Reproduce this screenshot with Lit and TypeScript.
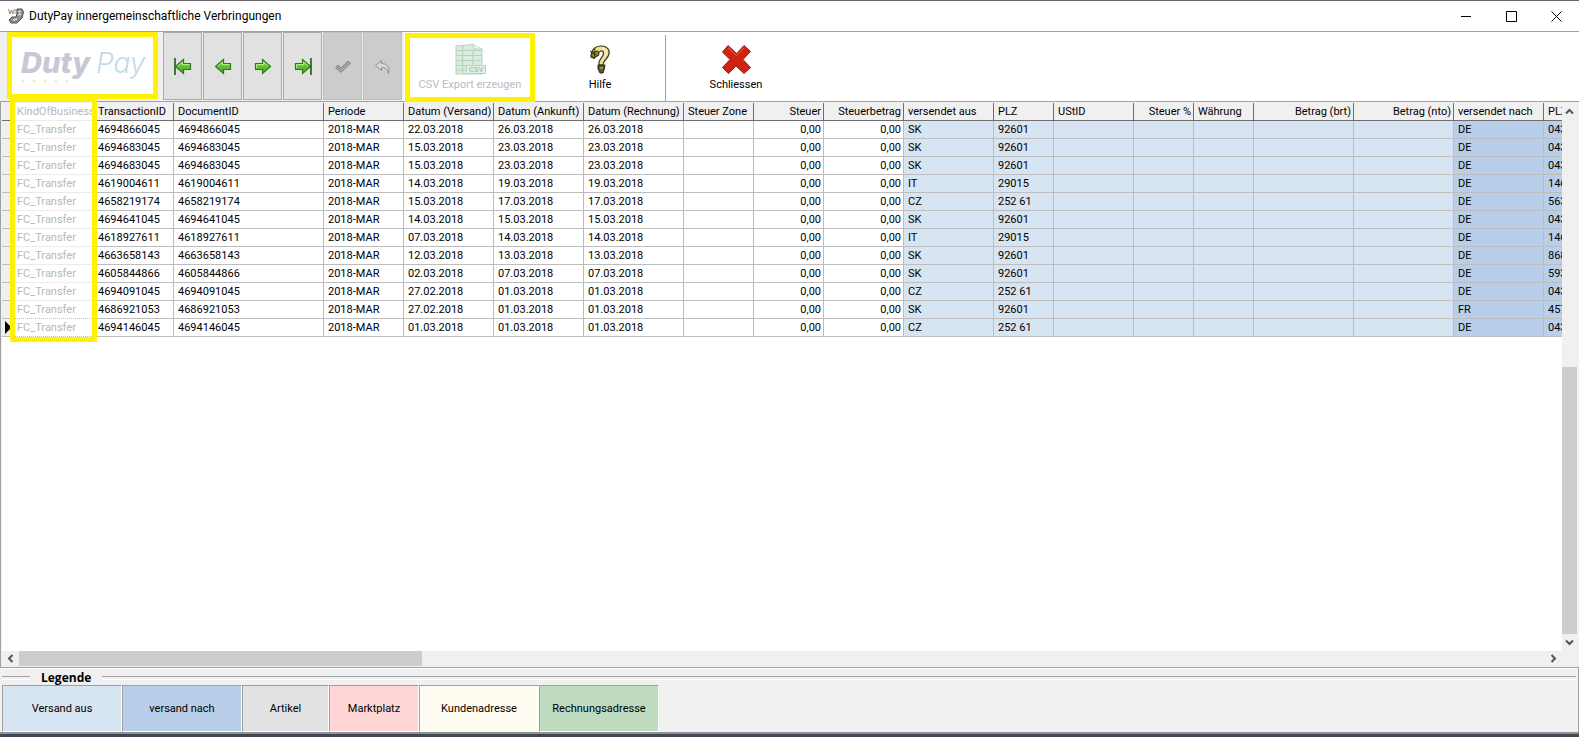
import { LitElement, html, css, svg, nothing } from "lit";
import { customElement } from "lit/decorators.js";
import { classMap } from "lit/directives/class-map.js";

interface Column {
  title: string;
  width: number;
  right?: boolean;
  tone?: "from" | "to" | "marked";
}

const COLUMNS: Column[] = [
  { title: "KindOfBusiness", width: 80, tone: "marked" },
  { title: "TransactionID", width: 80 },
  { title: "DocumentID", width: 150 },
  { title: "Periode", width: 80 },
  { title: "Datum (Versand)", width: 90 },
  { title: "Datum (Ankunft)", width: 90 },
  { title: "Datum (Rechnung)", width: 100 },
  { title: "Steuer Zone", width: 70 },
  { title: "Steuer", width: 70, right: true },
  { title: "Steuerbetrag", width: 80, right: true },
  { title: "versendet aus", width: 90, tone: "from" },
  { title: "PLZ", width: 60, tone: "from" },
  { title: "UStID", width: 80, tone: "from" },
  { title: "Steuer %", width: 60, right: true, tone: "from" },
  { title: "Währung", width: 60, tone: "from" },
  { title: "Betrag (brt)", width: 100, right: true, tone: "from" },
  { title: "Betrag (nto)", width: 100, right: true, tone: "from" },
  { title: "versendet nach", width: 90, tone: "to" },
  { title: "PLZ", width: 60, tone: "to" },
];

// id, shipped, arrived, origin country, origin zip, target country, target zip
const TRANSFERS: string[][] = [
  ["4694866045", "22.03.2018", "26.03.2018", "SK", "92601", "DE", "04347"],
  ["4694683045", "15.03.2018", "23.03.2018", "SK", "92601", "DE", "04347"],
  ["4694683045", "15.03.2018", "23.03.2018", "SK", "92601", "DE", "04347"],
  ["4619004611", "14.03.2018", "19.03.2018", "IT", "29015", "DE", "14656"],
  ["4658219174", "15.03.2018", "17.03.2018", "CZ", "252 61", "DE", "56330"],
  ["4694641045", "14.03.2018", "15.03.2018", "SK", "92601", "DE", "04347"],
  ["4618927611", "07.03.2018", "14.03.2018", "IT", "29015", "DE", "14656"],
  ["4663658143", "12.03.2018", "13.03.2018", "SK", "92601", "DE", "86836"],
  ["4605844866", "02.03.2018", "07.03.2018", "SK", "92601", "DE", "59368"],
  ["4694091045", "27.02.2018", "01.03.2018", "CZ", "252 61", "DE", "04347"],
  ["4686921053", "27.02.2018", "01.03.2018", "SK", "92601", "FR", "45770"],
  ["4694146045", "01.03.2018", "01.03.2018", "CZ", "252 61", "DE", "04347"],
];

const toRow = ([id, sent, arrived, from, fromZip, to, toZip]: string[]) => [
  "FC_Transfer", id, id, "2018-MAR", sent, arrived, arrived, "", "0,00", "0,00",
  from, fromZip, "", "", "", "", "", to, toZip,
];

const LEGEND = [
  { text: "Versand aus", cls: "l-from" },
  { text: "versand nach", cls: "l-to" },
  { text: "Artikel", cls: "l-item" },
  { text: "Marktplatz", cls: "l-market" },
  { text: "Kundenadresse", cls: "l-customer" },
  { text: "Rechnungsadresse", cls: "l-invoice" },
];

const arrowLeft = svg`<path d="M1.5 8.5 9.5 1.5V5.5H16.5V11.5H9.5V15.5Z" fill="url(#g)" stroke="#2c7a14" stroke-width="1.2"/><path d="M3.5 8.5 8.5 4V6.6H15.4" fill="none" stroke="#b6ee8c"/>`;
const arrowRight = svg`<path d="M16.5 8.5 8.5 1.5V5.5H1.5V11.5H8.5V15.5Z" fill="url(#g)" stroke="#2c7a14" stroke-width="1.2"/><path d="M2.6 10V6.6H9.6V4L14 7.8" fill="none" stroke="#b6ee8c"/>`;
const bar = (x: number) => svg`<path d="M${x} 0V17" stroke="#1d5c12" stroke-width="1.6"/>`;

const NAV = [
  { label: "Erster Datensatz", off: false, icon: svg`${bar(1)}${arrowLeft}` },
  { label: "Vorheriger Datensatz", off: false, icon: arrowLeft },
  { label: "Nächster Datensatz", off: false, icon: arrowRight },
  { label: "Letzter Datensatz", off: false, icon: svg`${arrowRight}${bar(17)}` },
  {
    label: "Übernehmen", off: true,
    icon: svg`<path d="M1.5 9.5 4 7 7 10 14 3 16.5 5 7 14.5Z" fill="#a2a2a2" stroke="#858585"/>`,
  },
  {
    label: "Verwerfen", off: true,
    icon: svg`<path d="M1.5 7.5 7.5 2.5V5.5C13 5.5 16 9 14.5 15.5C13.5 11 11.5 9.5 7.5 9.5V12.5Z" fill="#d9d9d9" stroke="#909090"/>`,
  },
];

const chevron = (d: string) => html`<svg width="9" height="9" viewBox="0 0 9 9" aria-hidden="true"><path d=${d} fill="none" stroke="#555" stroke-width="2"/></svg>`;

@customElement("app-root")
export class AppRoot extends LitElement {
  static styles = css`
    :host {
      display: flex;
      flex-direction: column;
      height: 100vh;
      box-sizing: border-box;
      border-top: 1px solid #69666b;
      background: #f0f0f0;
      color: #000;
      font: 11px/16px Roboto, "Liberation Sans", sans-serif;
      overflow: hidden;
    }
    * { box-sizing: border-box; }
    button { margin: 0; padding: 0; border: 0; background: none; font: inherit; color: inherit; }
    svg { display: block; flex: none; }

    .titlebar { display: flex; align-items: center; height: 30px; flex: none; background: #fff; padding-left: 8px; }
    .titlebar h1 { flex: 1; margin: 0 0 0 5px; font: 12px/16px Roboto, "Open Sans", sans-serif; }
    .win { width: 45px; height: 30px; display: grid; place-items: center; }

    .toolbar { display: flex; height: 71px; flex: none; border-top: 1px solid #a2a2a2; border-bottom: 1px solid #a2a2a2; background: #fff; }
    .nav { display: flex; background: #f0f0f0; padding: 0 1px 1px 7px; }
    .logo { width: 151px; height: 67px; border: 5px solid #fff200; background: #fff; margin-right: 5px; display: grid; place-items: center; }
    .step { width: 39px; height: 68px; margin-right: 1px; border: 1px solid #ababab; background: #e1e1e1; display: grid; place-items: center; }
    .step:disabled { background: #ccc; border-color: #bfbfbf; }
    .tool { width: 130px; display: flex; flex-direction: column; align-items: center; gap: 2px; padding-top: 12px; }
    .tool.marked { border: 5px solid #fff200; padding-top: 6px; margin: 1px 0 0 1px; height: 69px; color: #bcbcbc; }
    .divider { width: 1px; background: #a0a0a0; margin: 3px 5px 0 0; }

    .grid { flex: 1; min-height: 0; display: grid; grid-template-columns: minmax(0, 1fr) 15px; grid-template-rows: minmax(0, 1fr) 15px; border-left: 1px solid #a0a0a0; padding: 1px 2px 1px 1px; position: relative; }
    .pane { overflow: hidden; background: #fff; }
    table { table-layout: fixed; border-spacing: 0; width: 0; }
    th, td { height: 18px; padding: 1px 2px 0 4px; border: 0 solid #bdbdbd; border-width: 0 1px 1px 0; text-align: left; font-weight: normal; line-height: 16px; white-space: nowrap; overflow: hidden; }
    th { background: #f0f0f0; border-color: #6e6e6e; }
    .right { text-align: right; }
    td.from { background: #d7e4f1; }
    td.to { background: #b9cfe9; }
    .marked-cell { background: #fff; color: #b8b8b8; border-color: #ececec; padding: 1px 0 0 3px; }
    tr:nth-last-child(-n + 2) td.marked-cell { border-bottom: 1px dotted #f3a9b4; }
    .row-head { background: #f0f0f0; padding: 0 0 0 3px; }
    .column-mark { position: absolute; left: 9px; top: -5px; width: 87px; height: 245px; border: 5px solid #fff200; pointer-events: none; }

    .vbar { display: flex; flex-direction: column; background: #f0f0f0; }
    .hbar { display: flex; background: #f0f0f0; }
    .scroll-btn { width: 17px; height: 17px; flex: none; display: grid; place-items: center; }
    .vbar .scroll-btn { width: 15px; }
    .hbar .scroll-btn { height: 15px; }
    .track { flex: 1; display: flex; }
    .vbar .track { flex-direction: column; justify-content: flex-end; }
    .thumb { background: #cdcdcd; }
    .vbar .thumb { height: 52%; }
    .hbar .thumb { width: 26.4%; }

    .legend { flex: none; border-top: 1px solid #a2a2a2; border-right: 1px solid #a2a2a2; padding: 2px 2px 0 2px; box-shadow: inset 0 1px #fff; }
    .caption { display: flex; align-items: center; margin: 0; height: 15px; font: bold 12px/15px "Open Sans", "Noto Sans", sans-serif; gap: 11px; }
    .caption::before, .caption::after { content: ""; height: 2px; border-top: 1px solid #a0a0a0; border-bottom: 1px solid #fff; width: 28px; }
    .caption::after { flex: 1; }
    .swatches { display: flex; list-style: none; margin: 0; padding: 0; }
    .swatch { width: 120px; height: 47px; display: grid; place-items: center; border: 1px solid #a0a0a0; border-right-color: #fff; border-bottom-color: #fff; }
    .l-from { background: #d7e4f1; }
    .l-to { background: #b9cfe9; }
    .l-item { background: #e2e2e2; width: 87px; }
    .l-market { background: #ffd5d5; width: 90px; }
    .l-customer { background: #fffcf1; }
    .l-invoice { background: #bfdbbf; }
    .base { flex: none; height: 5px; border-top: 2px solid #8f9194; background: #414853; }
  `;

  private titleBar() {
    return html`<header class="titlebar">
      <svg width="16" height="16" viewBox="0 0 16 16" aria-hidden="true">
        <path d="M9 1 14 1 15.5 4 14 10 9 15 3 15 1 12 4 9 8 9 9 6Z" fill="#8d8d8d" stroke="#4d4d4d"/>
        <path d="M10 4 13 3M10 7 13 6M5 12 9 11" stroke="#ddd" stroke-width="1.5"/>
        <path d="M0.5 1 2 6 3.5 2 5 6 6.5 1M8 1V6" fill="none" stroke="#a87f68"/>
      </svg>
      <h1>DutyPay innergemeinschaftliche Verbringungen</h1>
      <button class="win" aria-label="Minimieren"><svg width="11" height="11"><path d="M0 5.5H10" stroke="#000"/></svg></button>
      <button class="win" aria-label="Maximieren"><svg width="11" height="11"><path d="M.5 .5H10.5V10.5H.5Z" fill="none" stroke="#000"/></svg></button>
      <button class="win" aria-label="Fenster schliessen"><svg width="11" height="11"><path d="M.5 .5 10.5 10.5M10.5 .5 .5 10.5" stroke="#000"/></svg></button>
    </header>`;
  }

  private toolBar() {
    return html`<div class="toolbar">
      <div class="nav">
        <div class="logo">
          <svg width="132" height="50" viewBox="0 0 132 50" role="img" aria-label="DutyPay">
            <text x="4" y="32" font-family="Inter, sans-serif" font-size="29" font-weight="800" font-style="italic" fill="#c6c8d6">Duty</text>
            <text x="79" y="32" font-family="Inter, sans-serif" font-size="28" font-weight="300" font-style="italic" fill="#c0dcea">Pay</text>
            ${[6, 17, 28, 39, 50].map((x) => svg`<path transform="translate(${x} 40)" d="M0-2 .6-.6 2-.5 1 .5 1.3 2 0 1.2-1.3 2-1 .5-2-.5-.6-.6Z" fill="#f4e9b8"/>`)}
          </svg>
        </div>
        ${NAV.map((n) => html`<button class="step" aria-label=${n.label} ?disabled=${n.off}>
          <svg width="18" height="17" viewBox="0 0 18 17">
            <defs><linearGradient id="g" x2="0" y2="1"><stop stop-color="#8ddb55"/><stop offset="1" stop-color="#3fa51c"/></linearGradient></defs>
            ${n.icon}
          </svg>
        </button>`)}
      </div>
      <button class="tool marked">
        <svg width="31" height="31" viewBox="0 0 31 31">
          <path d="M1 2 18 .5 27 5V30H1Z" fill="#d9ecdd" stroke="#b4d3bc"/>
          <path d="M18 .5 19 5 27 5" fill="#eef7f0" stroke="#b4d3bc"/>
          <path d="M1 6.5H27M1 11.5H27M1 16.5H27M1 21.5H27M1 26H10M7.5 2V30M18 6V21" stroke="#b4d3bc" stroke-width="1.2"/>
          <path d="M11.5 21.5H30.5V29.5H11.5Z" fill="#e4f1e7" stroke="#b4d3bc"/>
          <text x="14" y="28.3" font-family="Liberation Sans, sans-serif" font-size="7" font-weight="bold" fill="#a5c8ae">CSV</text>
        </svg>
        CSV Export erzeugen
      </button>
      <button class="tool">
        <svg width="31" height="31" viewBox="0 0 31 31">
          <path d="M6 13C6 5 11 2 16 2C22 2 25 5.5 24 10C23 15 18 16 18 21H14C13 15 19 13 18.5 9C18 6 14 6 13 11L9 14Z" fill="#efe09c" stroke="#3d3610" stroke-width="1.2"/>
          <path d="M8 8 13 7 14 11 9 14 6 12Z" fill="#968b2b" stroke="#3d3610"/>
          <path d="M5 7 13 12M10 5 9 15" stroke="#3d3610"/>
          <path d="M17 4C22 4 22 9 20 12" stroke="#fff8d2" fill="none"/>
          <path d="M13 21H20L19 26 18 29H15L13 25Z" fill="#5e5a2a" stroke="#25220f"/>
          <path d="M15 24H18" stroke="#d4c66a"/>
        </svg>
        Hilfe
      </button>
      <div class="divider"></div>
      <button class="tool">
        <svg width="31" height="31" viewBox="0 0 31 31">
          <path d="M7 1.5 15.5 9.5 23 1.5 29.5 7.5 22 15.5 29.5 23.5 23 29.5 15 22 7.5 29.5 1.5 23.5 9 15.5 1.5 8Z" fill="#cf2410" stroke="#86200f"/>
          <path d="M7 3.5 15.5 11.5 23 3.5" fill="none" stroke="#ec6a4c"/>
        </svg>
        Schliessen
      </button>
    </div>`;
  }

  private cellClass(c: Column) {
    return classMap({
      right: !!c.right,
      from: c.tone === "from",
      to: c.tone === "to",
      "marked-cell": c.tone === "marked",
    });
  }

  private dataGrid() {
    return html`<main class="grid">
      <div class="pane">
        <table>
          <colgroup><col width="12" />${COLUMNS.map((c) => html`<col width=${c.width} />`)}</colgroup>
          <thead><tr><th class="row-head"></th>${COLUMNS.map((c) => html`<th scope="col" class=${this.cellClass(c)}>${c.title}</th>`)}</tr></thead>
          <tbody>
            ${TRANSFERS.map(toRow).map((row, i) => html`<tr>
              <td class="row-head">${i === TRANSFERS.length - 1
                ? html`<svg width="7" height="13" viewBox="0 0 7 13"><path d="M0 0 6.5 6.5 0 13Z"/></svg>` : nothing}</td>
              ${row.map((v, k) => html`<td class=${this.cellClass(COLUMNS[k])}>${v}</td>`)}
            </tr>`)}
          </tbody>
        </table>
      </div>
      <div class="vbar">
        <button class="scroll-btn" aria-label="Nach oben">${chevron("M1 6.5 4.5 3 8 6.5")}</button>
        <div class="track"><div class="thumb"></div></div>
        <button class="scroll-btn" aria-label="Nach unten">${chevron("M1 2.5 4.5 6 8 2.5")}</button>
      </div>
      <div class="hbar">
        <button class="scroll-btn" aria-label="Nach links">${chevron("M6.5 1 3 4.5 6.5 8")}</button>
        <div class="track"><div class="thumb"></div></div>
        <button class="scroll-btn" aria-label="Nach rechts">${chevron("M2.5 1 6 4.5 2.5 8")}</button>
      </div>
      <div class="column-mark"></div>
    </main>`;
  }

  render() {
    return html`
      ${this.titleBar()} ${this.toolBar()} ${this.dataGrid()}
      <section class="legend">
        <h2 class="caption">Legende</h2>
        <ul class="swatches">${LEGEND.map((l) => html`<li class="swatch ${l.cls}">${l.text}</li>`)}</ul>
      </section>
      <div class="base"></div>`;
  }
}
